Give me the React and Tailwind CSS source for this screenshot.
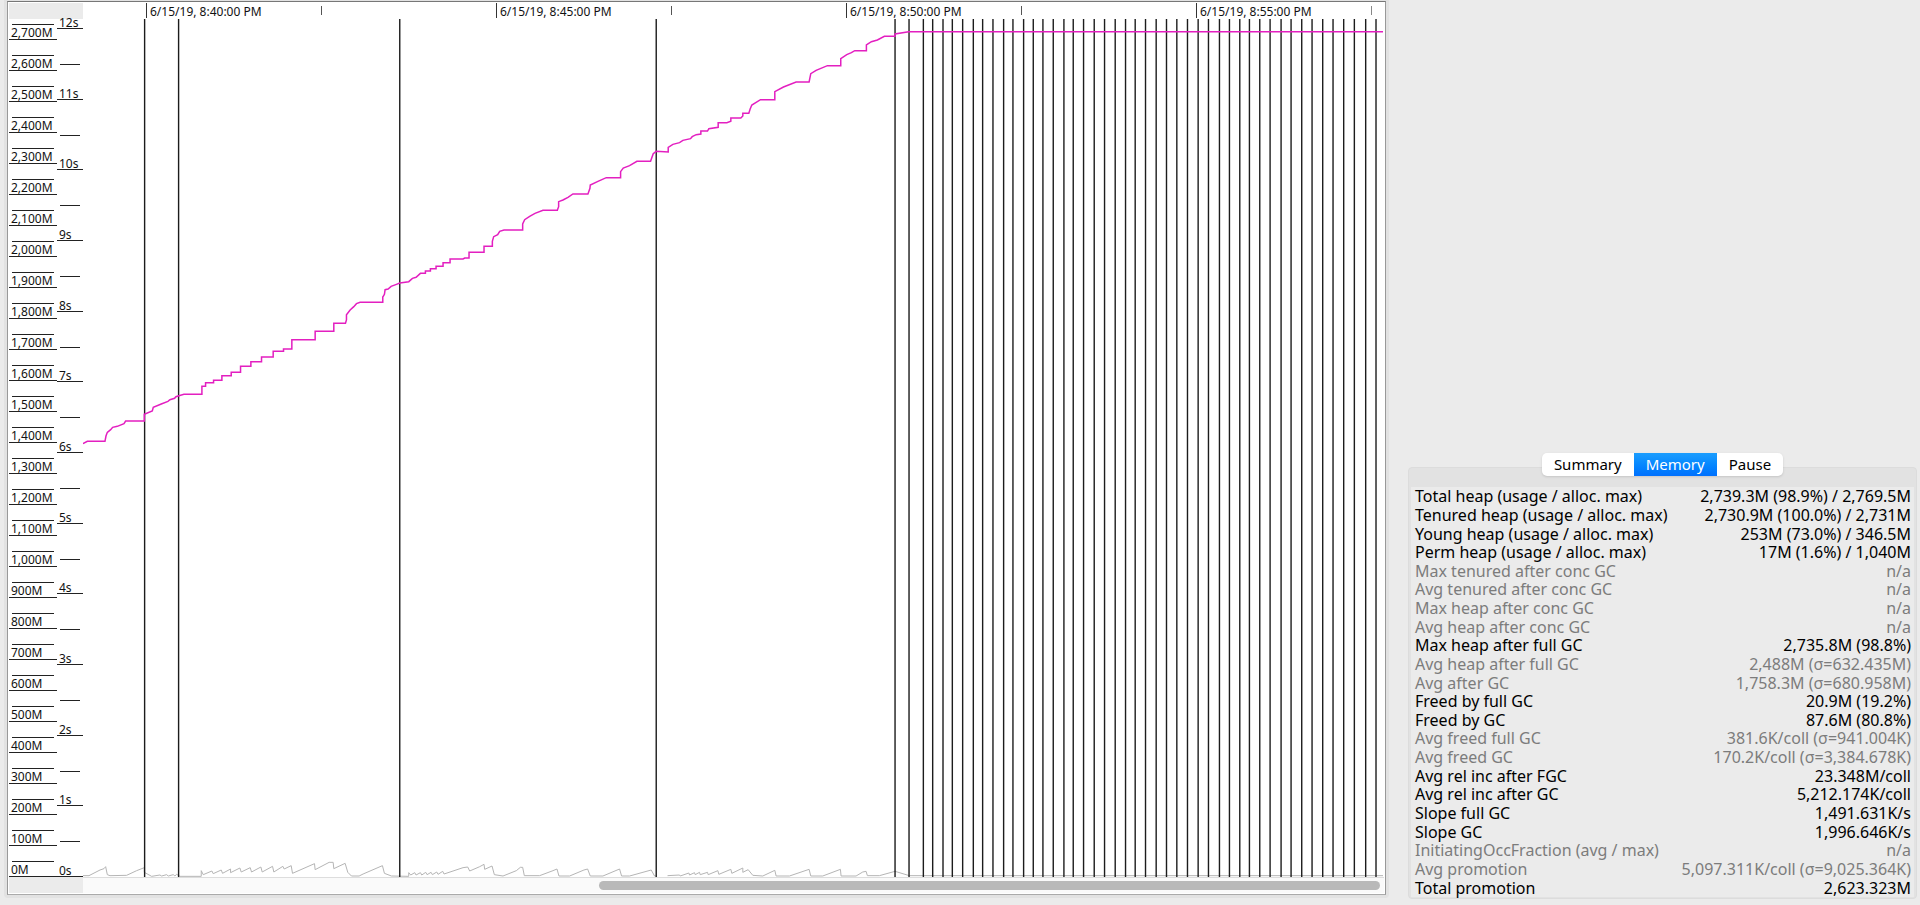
import React, { useState } from "react";

// Heap scale, top to bottom
const MEMORY_LABELS = [
  "2,700M", "2,600M", "2,500M", "2,400M", "2,300M", "2,200M", "2,100M",
  "2,000M", "1,900M", "1,800M", "1,700M", "1,600M", "1,500M", "1,400M",
  "1,300M", "1,200M", "1,100M", "1,000M", "900M", "800M", "700M", "600M",
  "500M", "400M", "300M", "200M", "100M", "0M",
];

const PAUSE_LABELS = [
  "11s", "10s", "9s", "8s", "7s", "6s", "5s", "4s", "3s", "2s", "1s", "0s",
];

// Header cells: full timestamp on every other tick
const TIME_CELLS = [
  "6/15/19, 8:40:00 PM", null,
  "6/15/19, 8:45:00 PM", null,
  "6/15/19, 8:50:00 PM", null,
  "6/15/19, 8:55:00 PM",
];

// Full GC events, x in chart units
const FULL_GCS = [
  434, 536, 1200, 1970, 2687, 2729, 2772, 2800, 2831, 2859, 2890, 2922, 2950,
  2981, 3013, 3041, 3073, 3102, 3131, 3162, 3194, 3222, 3253, 3285, 3316,
  3348, 3379, 3408, 3439, 3471, 3502, 3533, 3565, 3597, 3628, 3661, 3691,
  3722, 3751, 3782, 3813, 3846, 3876, 3908, 3939, 3971, 4002, 4034, 4066,
  4100, 4131,
];

const TENURED_PATH =
  "M249 1331L262 1324H315L318 1308L322 1297L332 1289L338 1282L352 1279L372 1271L377 1263H433V1243L457 1233L460 1222L484 1212L504 1204L510 1199L524 1195L528 1190L537 1187L552 1183H606V1159H617V1148H641V1141H666V1127H694V1117H722V1099H753V1085H785V1071H820V1054H851V1047H876V1019H946V994H1002V970H1037L1040 960V944L1051 930L1062 920L1070 911L1081 907H1149V891L1154 883L1156 869L1165 867L1174 859L1190 853L1200 849L1227 845L1238 835L1249 832L1262 820H1277V813H1292V806H1309V799H1330V788H1351V777H1390L1395 774H1408V757H1453V739H1478V724L1482 710L1494 704L1500 694L1513 690H1569V672L1575 659L1590 649L1606 640L1630 631H1673L1677 620V605L1690 600L1705 592L1720 582H1765L1771 565L1772 555L1795 544L1820 533H1863V515L1871 504L1890 497L1912 484H1953L1961 461L1970 454L2006 456V442L2020 433L2040 428L2050 421L2073 416L2078 410L2090 404L2104 402V393H2124L2128 386L2156 382V368H2182L2194 364V354H2224L2230 348V340H2248L2252 327L2257 315L2283 299H2326V275L2352 261L2390 246H2429L2434 221L2450 211L2484 197H2524V176L2542 164L2556 158L2566 152H2601V135L2616 125L2634 120L2655 109H2687V102L2728 95H4152";

const YOUNG_PATH =
  "M249 2627H267L300 2610L312 2606L317 2600L322 2624L330 2627L380 2626L410 2612L433 2603V2617L455 2629L480 2625L485 2628L500 2624L505 2628L520 2624L525 2628L530 2623L540 2629H604V2612L610 2624L636 2613L640 2621L664 2610L668 2620L692 2607V2618L720 2604L724 2616L751 2603L755 2616L783 2601L787 2616L818 2599L822 2616L849 2599L853 2607L874 2597L878 2620L944 2591L946 2609L988 2587H1000L1002 2606L1036 2590L1044 2617L1055 2628H1078L1090 2622L1148 2597L1154 2620L1175 2628L1227 2629V2618L1233 2625L1245 2618L1249 2625L1262 2618L1266 2625L1278 2617L1282 2624L1294 2617L1298 2624L1311 2616L1315 2623L1329 2614L1333 2622L1390 2603L1404 2601L1410 2613L1440 2600L1453 2593L1455 2608L1477 2598L1484 2624L1510 2628L1550 2612L1562 2602H1569L1574 2627H1620L1660 2612L1672 2607L1678 2628H1710L1753 2610L1764 2607L1772 2628H1810L1860 2607L1866 2628H1890L1955 2610L1965 2628H1970M2004 2627L2040 2625L2042 2628L2068 2619L2070 2625L2085 2618L2087 2624L2100 2617L2102 2624L2124 2617L2126 2624L2155 2612L2158 2623L2194 2608L2197 2620L2230 2604V2617L2246 2609L2260 2626L2290 2628L2326 2611L2330 2628H2370L2429 2608L2434 2628H2470L2523 2608L2525 2628H2570L2590 2616L2600 2614L2604 2627H2640L2687 2614L2730 2627H4152";

const TABS = ["Summary", "Memory", "Pause"];

// [label, value, greyed out]
const STATS = [
  ["Total heap (usage / alloc. max)", "2,739.3M (98.9%) / 2,769.5M"],
  ["Tenured heap (usage / alloc. max)", "2,730.9M (100.0%) / 2,731M"],
  ["Young heap (usage / alloc. max)", "253M (73.0%) / 346.5M"],
  ["Perm heap (usage / alloc. max)", "17M (1.6%) / 1,040M"],
  ["Max tenured after conc GC", "n/a", true],
  ["Avg tenured after conc GC", "n/a", true],
  ["Max heap after conc GC", "n/a", true],
  ["Avg heap after conc GC", "n/a", true],
  ["Max heap after full GC", "2,735.8M (98.8%)"],
  ["Avg heap after full GC", "2,488M (σ=632.435M)", true],
  ["Avg after GC", "1,758.3M (σ=680.958M)", true],
  ["Freed by full GC", "20.9M (19.2%)"],
  ["Freed by GC", "87.6M (80.8%)"],
  ["Avg freed full GC", "381.6K/coll (σ=941.004K)", true],
  ["Avg freed GC", "170.2K/coll (σ=3,384.678K)", true],
  ["Avg rel inc after FGC", "23.348M/coll"],
  ["Avg rel inc after GC", "5,212.174K/coll"],
  ["Slope full GC", "1,491.631K/s"],
  ["Slope GC", "1,996.646K/s"],
  ["InitiatingOccFraction (avg / max)", "n/a", true],
  ["Avg promotion", "5,097.311K/coll (σ=9,025.364K)", true],
  ["Total promotion", "2,623.323M"],
];

function TimeHeader() {
  return (
    <div className="flex h-4">
      <div className="w-[74px] shrink-0 bg-[#ebebeb]" />
      <div className="grid flex-1 grid-cols-[63fr_repeat(7,minmax(0,175fr))_13fr]">
        <div />
        {TIME_CELLS.map((label, i) =>
          label ? (
            <div
              key={i}
              className="h-[15px] border-l border-[#333] pl-[3px] leading-[18px] whitespace-nowrap"
            >
              {label}
            </div>
          ) : (
            <div key={i} className="mt-[3px] h-[9px] border-l border-[#555]" />
          )
        )}
        <div className="mt-[3px] h-[9px] border-l border-[#888]" />
      </div>
    </div>
  );
}

function MemoryAxis() {
  return (
    <div className="flex w-12 flex-col">
      {MEMORY_LABELS.map((label, i) => (
        <div
          key={label}
          className={`flex flex-col justify-end border-b border-[#222] ${
            i === 0 ? "h-[21px]" : "h-[31px]"
          }`}
        >
          <div className="mx-[3px] h-px bg-[#222]" />
          <div className="h-[14px] pl-[2px] leading-4">{label}</div>
        </div>
      ))}
    </div>
  );
}

function PauseAxis() {
  return (
    <div className="flex w-[26px] flex-col">
      <div className="flex h-[10px] flex-col justify-end border-b border-[#222]">
        <div className="h-3 pl-[2px] leading-[14px]">12s</div>
      </div>
      {PAUSE_LABELS.map((label) => (
        <div
          key={label}
          className="flex flex-1 flex-col justify-between border-b border-[#222]"
        >
          <div className="mt-[35px] ml-[3px] h-px w-5 bg-[#222]" />
          <div className="h-3 pl-[2px] leading-[14px]">{label}</div>
        </div>
      ))}
    </div>
  );
}

function Plot() {
  return (
    <div className="min-w-0 flex-1">
      <svg
        className="h-[858px] w-full"
        viewBox="249 57 3906 2574"
        preserveAspectRatio="none"
        fill="none"
        role="img"
        aria-label="Heap usage over time"
      >
        <path d={YOUNG_PATH} stroke="#b5b5b5" vectorEffect="non-scaling-stroke" />
        {FULL_GCS.map((x) => (
          <path
            key={x}
            d={`M${x} 57V2631`}
            stroke="#1c1c1c"
            strokeWidth="1.4"
            vectorEffect="non-scaling-stroke"
          />
        ))}
        <path
          d={TENURED_PATH}
          stroke="#e31fc0"
          strokeWidth="1.5"
          vectorEffect="non-scaling-stroke"
        />
      </svg>
    </div>
  );
}

function ChartPanel() {
  return (
    <main className="min-w-0 flex-1 self-start rounded-b bg-[#e2e2e2] px-[3px] pt-px pb-[3px]">
      <div className="border border-t-[#777] border-r-[#999] border-b-[#aaa] border-l-[#999] bg-white px-px pt-px pb-px text-[12px] text-[#111]">
        <TimeHeader />
        <div className="flex">
          <MemoryAxis />
          <PauseAxis />
          <Plot />
        </div>
        {/* Horizontal scrollbar */}
        <div className="flex h-4">
          <div className="w-[74px] shrink-0 bg-[#ebebeb]" />
          <div className="flex flex-1 items-center border-t border-[#ddd] bg-[#fafafa] pr-1 pl-[37.5%]">
            <div className="h-[9px] flex-1 rounded-full bg-[#b9b9b9]" />
          </div>
        </div>
      </div>
    </main>
  );
}

function StatsPanel() {
  const [active, setActive] = useState("Memory");

  return (
    <aside className="flex w-[531px] shrink-0 flex-col justify-end pr-[3px] pb-[6px] pl-[19px] text-[16px]">
      <div
        role="tablist"
        className="z-10 mx-auto -mb-[9px] flex rounded-[5px] bg-white text-[15px] shadow-sm"
      >
        {TABS.map((tab) => (
          <button
            key={tab}
            type="button"
            role="tab"
            aria-selected={tab === active}
            onClick={() => setActive(tab)}
            className={`h-[23px] px-3 leading-[23px] first:rounded-l-[5px] last:rounded-r-[5px] ${
              tab === active
                ? "bg-gradient-to-b from-[#1a9dfe] to-[#0070fe] text-white"
                : "text-black"
            }`}
          >
            {tab}
          </button>
        ))}
      </div>
      <div className="rounded border border-[#dcdcdc] bg-[#e2e2e2] px-[2px] pt-[19px] pb-px">
        <div className="bg-[#ebebeb] pr-[3px] pl-1">
          <table className="h-[410px] w-full">
            <tbody>
              {STATS.map(([label, value, muted]) => (
                <tr
                  key={label}
                  className={`leading-[18px] ${muted ? "text-[#7c7c7c]" : "text-black"}`}
                >
                  <th scope="row" className="p-0 text-left font-normal">
                    {label}
                  </th>
                  <td className="p-0 text-right">{value}</td>
                </tr>
              ))}
            </tbody>
          </table>
        </div>
      </div>
    </aside>
  );
}

export default function App() {
  return (
    <div className="flex min-h-screen bg-[#ebebeb] pl-1 font-['Noto_Sans',sans-serif]">
      <ChartPanel />
      <StatsPanel />
    </div>
  );
}
